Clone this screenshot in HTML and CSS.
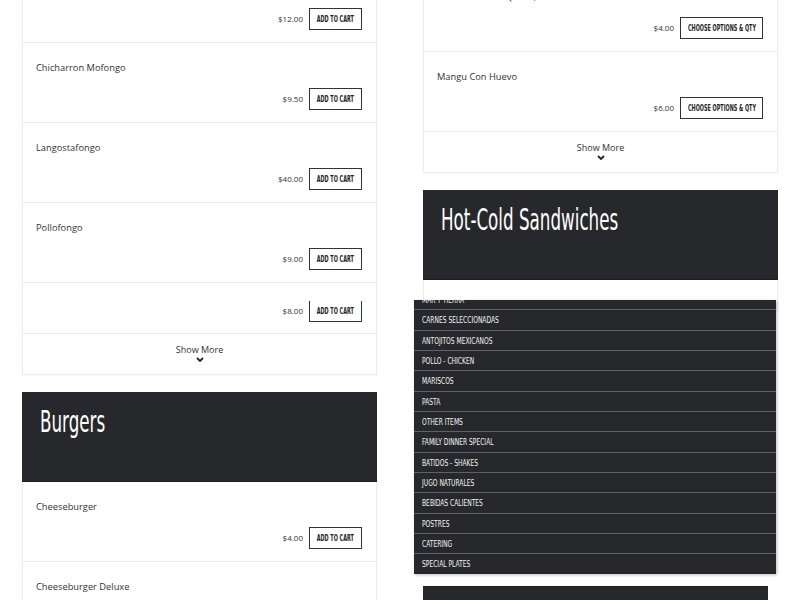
FILE: index.html
```html
<!DOCTYPE html>
<html lang="en">
<head>
    <meta charset="UTF-8">
    <meta name="viewport" content="width=device-width, initial-scale=1.0">
    <title>Menu</title>
    <link rel="stylesheet" href="styles.css">
</head>
<body>
    <div class="page">
        <div class="col col-left">
            <div class="card">
                <div class="item">
                    <div class="item-name">Mofongo De Camarones</div>
                    <div class="item-meta">
                        <span class="price">$12.00</span>
                        <button class="btn btn-cart"><span>Add to cart</span></button>
                    </div>
                </div>
                <div class="item">
                    <div class="item-name">Chicharron Mofongo</div>
                    <div class="item-meta">
                        <span class="price">$9.50</span>
                        <button class="btn btn-cart"><span>Add to cart</span></button>
                    </div>
                </div>
                <div class="item">
                    <div class="item-name">Langostafongo</div>
                    <div class="item-meta">
                        <span class="price">$40.00</span>
                        <button class="btn btn-cart"><span>Add to cart</span></button>
                    </div>
                </div>
                <div class="item">
                    <div class="item-name">Pollofongo</div>
                    <div class="item-meta">
                        <span class="price">$9.00</span>
                        <button class="btn btn-cart"><span>Add to cart</span></button>
                    </div>
                </div>
                <div class="item item-cut">
                    <div class="item-meta">
                        <span class="price">$8.00</span>
                        <button class="btn btn-cart"><span>Add to cart</span></button>
                    </div>
                </div>
                <div class="show-more">
                    Show More
                    <svg class="chevron" width="8" height="5" viewBox="0 0 8 5"><path d="M1 1l3 3 3-3" fill="none" stroke="#222" stroke-width="1.8"/></svg>
                </div>
            </div>

            <div class="section-head"><h2><span>Burgers</span></h2></div>
            <div class="card card-open">
                <div class="item">
                    <div class="item-name">Cheeseburger</div>
                    <div class="item-meta">
                        <span class="price">$4.00</span>
                        <button class="btn btn-cart"><span>Add to cart</span></button>
                    </div>
                </div>
                <div class="item">
                    <div class="item-name">Cheeseburger Deluxe</div>
                    <div class="item-meta">
                        <span class="price">$6.00</span>
                        <button class="btn btn-cart"><span>Add to cart</span></button>
                    </div>
                </div>
            </div>
        </div>

        <div class="col col-right">
            <div class="card">
                <div class="item">
                    <div class="item-name">Salchichon Con Queso, Tostones</div>
                    <div class="item-meta">
                        <span class="price">$4.00</span>
                        <button class="btn btn-options"><span>Choose options &amp; qty</span></button>
                    </div>
                </div>
                <div class="item">
                    <div class="item-name">Mangu Con Huevo</div>
                    <div class="item-meta">
                        <span class="price">$6.00</span>
                        <button class="btn btn-options"><span>Choose options &amp; qty</span></button>
                    </div>
                </div>
                <div class="show-more">
                    Show More
                    <svg class="chevron" width="8" height="5" viewBox="0 0 8 5"><path d="M1 1l3 3 3-3" fill="none" stroke="#222" stroke-width="1.8"/></svg>
                </div>
            </div>

            <div class="section-head"><h2><span>Hot-Cold Sandwiches</span></h2></div>
            <div class="card card-open card-empty"></div>
            <div class="dark-block"></div>
        </div>

        <nav class="cat-menu">
            <ul>
                <li><span>Mar y Tierra</span></li>
                <li><span>Carnes Seleccionadas</span></li>
                <li><span>Antojitos Mexicanos</span></li>
                <li><span>Pollo - Chicken</span></li>
                <li><span>Mariscos</span></li>
                <li><span>Pasta</span></li>
                <li><span>Other Items</span></li>
                <li><span>Family Dinner Special</span></li>
                <li><span>Batidos - Shakes</span></li>
                <li><span>Jugo Naturales</span></li>
                <li><span>Bebidas Calientes</span></li>
                <li><span>Postres</span></li>
                <li><span>Catering</span></li>
                <li><span>Special Plates</span></li>
            </ul>
        </nav>
    </div>
</body>
</html>
```

FILE: styles.css
```css
body {
    margin: 0;
    font-family: "Open Sans", "Noto Sans", sans-serif;
    color: #333;
    background-color: #fff;
    overflow: hidden;
}
.page {
    position: relative;
    display: flex;
    gap: 46px;
    padding: 0 22px;
    margin-top: -38px;
}
.col {
    width: 355px;
    flex-shrink: 0;
}
.col-right {
    padding-top: 9px;
}
.card {
    border: 1px solid #ececec;
    background-color: #fff;
    box-shadow: 0 1px 2px rgba(0, 0, 0, 0.04);
}
.card-open {
    border-top: none;
}
.card-empty {
    height: 30px;
}
.item {
    padding: 18px 14px 12px 13px;
    border-bottom: 1px solid #ececec;
}
.item-name {
    font-size: 9.3px;
    line-height: 14px;
    white-space: nowrap;
}
.item-meta {
    display: flex;
    justify-content: flex-end;
    align-items: center;
    gap: 6px;
    margin-top: 13px;
}
.item-cut {
    padding-top: 18px;
    padding-bottom: 11px;
}
.item-cut .item-meta {
    margin-top: 0;
}
.item-cut .btn {
    border-top: none;
    height: 21px;
}
.price {
    font-size: 8px;
    margin-bottom: 2px;
}
.btn {
    display: flex;
    justify-content: center;
    align-items: center;
    height: 22px;
    padding: 0;
    border: 1.5px solid #333;
    background-color: #fff;
    color: #222;
    font-family: "DejaVu Sans Condensed", "DejaVu Sans", sans-serif;
    font-size: 8px;
    font-weight: bold;
    text-transform: uppercase;
    white-space: nowrap;
    cursor: pointer;
}
.btn span {
    display: inline-block;
    transform: scaleX(0.68);
}
.btn-cart {
    width: 53px;
}
.btn-options {
    width: 83px;
}
.show-more {
    height: 40px;
    padding-top: 10px;
    box-sizing: border-box;
    font-size: 9px;
    line-height: 12px;
    text-align: center;
}
.chevron {
    display: block;
    margin: 1px auto 0;
}
.section-head {
    margin-top: 17px;
    height: 90px;
    padding: 12px 18px 0;
    box-sizing: border-box;
    background-color: #26282b;
    border-bottom: 1px solid #1c1d1f;
}
.section-head h2 {
    margin: 0;
    color: #fff;
    font-family: "DejaVu Sans Condensed", "DejaVu Sans", sans-serif;
    font-size: 30px;
    font-weight: normal;
    line-height: 36px;
    white-space: nowrap;
}
.section-head h2 span {
    display: inline-block;
    transform: scaleX(0.62);
    transform-origin: left center;
}
.dark-block {
    margin-top: 275px;
    width: 345px;
    height: 40px;
    background-color: #26282b;
    border-top: 1px solid #1c1d1f;
}
.cat-menu {
    position: absolute;
    left: 414px;
    top: 338px;
    width: 362px;
    height: 274px;
    overflow: hidden;
    background-color: #26282b;
    box-shadow: 1px 1px 3px rgba(0, 0, 0, 0.25);
}
.cat-menu ul {
    list-style: none;
    margin: -10px 0 0;
    padding: 0;
}
.cat-menu li {
    height: 19.35px;
    line-height: 19.35px;
    padding-left: 8px;
    border-bottom: 1px solid #5f6164;
    color: #f4f4f4;
    font-family: "DejaVu Sans Condensed", "DejaVu Sans", sans-serif;
    font-size: 9.5px;
    text-transform: uppercase;
    white-space: nowrap;
}
.cat-menu li span {
    display: inline-block;
    transform: scaleX(0.7);
    transform-origin: left center;
}
.cat-menu li:last-child {
    border-bottom: none;
}
```
